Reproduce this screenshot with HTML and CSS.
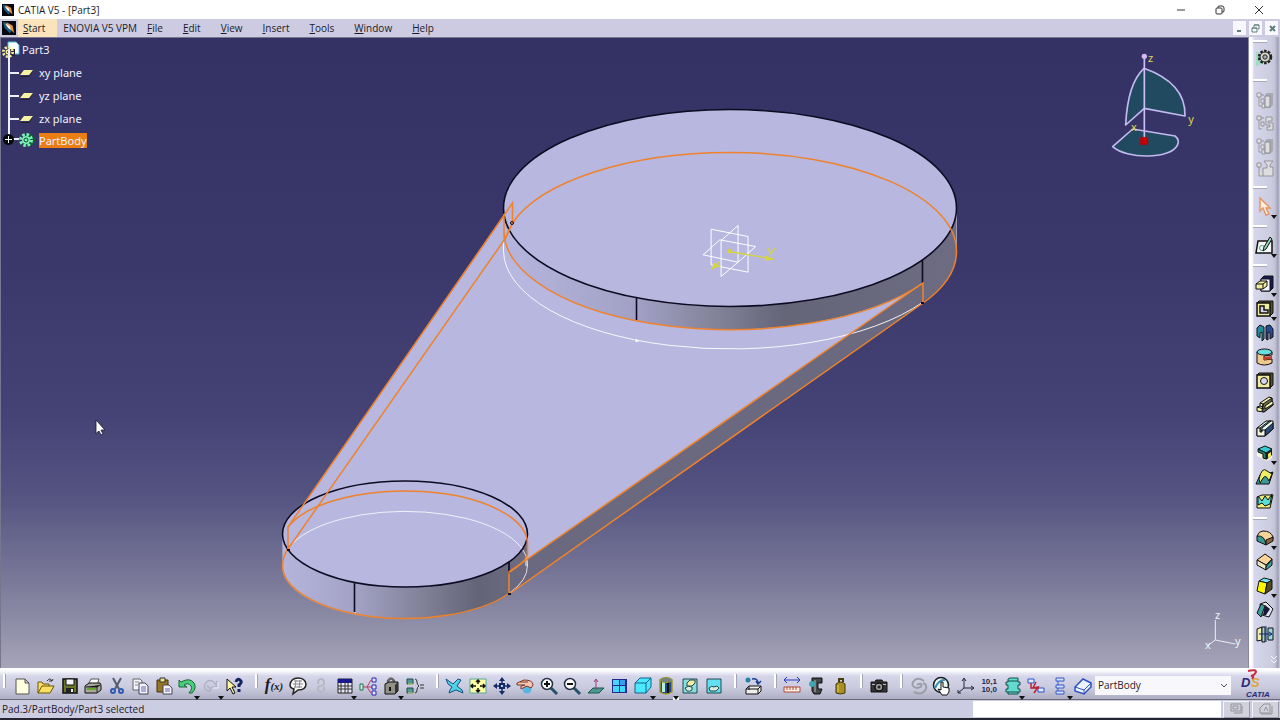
FILE: index.html
```html
<!DOCTYPE html>
<html lang="en">
<head>
<meta charset="utf-8">
<title>CATIA V5 - [Part3]</title>
<link rel="stylesheet" href="styles.css">
</head>
<body>
<svg class="defs" aria-hidden="true">
  <defs>
    <symbol id="app" viewBox="0 0 16 16"><path fill="#07080f" d="M0 0h16v16H0z"/><path fill="#1d5c86" d="M1 1l6 1 5 8-3 4-6-6z"/><path fill="#e8913f" d="M6 2l6 3 2 9-4-4-6-6z"/><path fill="#f4ffff" d="M4 3l5 3 1 4-3-2z"/></symbol>
    <symbol id="plane" viewBox="0 0 14 8"><path fill="#222" d="M1 7h8l4-6v1l-4 6H0z"/><path fill="#f6f3a0" d="M4 1h9L9 6H0z"/></symbol>
    <symbol id="node" viewBox="0 0 20 20"><path d="M2 3h4v4H2zM4 7v9h3M6 5h3M6 9h3v4H6zM7 14h3v4H7z" fill="#e2e2ec" stroke="#96969f"/><path d="M10 5l2-2h6v12l-3 3h-5z" fill="#a9a9b2"/><path d="M10 6h5v11h-5z" fill="#ddd" stroke="#8c8c95"/></symbol>
  </defs>
</svg>

<header class="titlebar">
  <svg class="titlebar-icon"><use href="#app"/></svg>
  <h1 class="titlebar-text">CATIA V5 - [Part3]</h1>
  <div class="window-controls">
    <button aria-label="Minimize"><svg viewBox="0 0 10 10"><path d="M1 5h8" /></svg></button>
    <button aria-label="Restore"><svg viewBox="0 0 10 10"><rect x="1" y="3" width="6" height="6" rx="1"/><path d="M3 3V2q0-1 1-1h3q2 0 2 2v3q0 1-1 1H7"/></svg></button>
    <button aria-label="Close"><svg viewBox="0 0 10 10"><path d="M1 1l8 8M9 1L1 9"/></svg></button>
  </div>
</header>

<nav class="menubar">
  <svg class="menubar-icon"><use href="#app"/></svg>
  <button class="menu menu-start"><u>S</u>tart</button>
  <button class="menu menu-enovia">ENOVIA V5 VPM</button>
  <button class="menu"><u>F</u>ile</button>
  <button class="menu"><u>E</u>dit</button>
  <button class="menu"><u>V</u>iew</button>
  <button class="menu"><u>I</u>nsert</button>
  <button class="menu"><u>T</u>ools</button>
  <button class="menu"><u>W</u>indow</button>
  <button class="menu"><u>H</u>elp</button>
  <div class="mdi-controls">
    <button aria-label="Minimize document"><svg viewBox="0 0 10 10"><path d="M2 8h4" stroke-width="2"/></svg></button>
    <button aria-label="Restore document"><svg viewBox="0 0 10 10"><path d="M1 5h5v4H1zM3 4V2h5v4H7M1 5h5M3 2h5"/></svg></button>
    <button aria-label="Close document"><svg viewBox="0 0 10 10"><path d="M3 3l5 5M8 3L3 8" stroke-width="2"/></svg></button>
  </div>
</nav>

<div class="workspace">
<main class="viewport">
  <svg class="scene" viewBox="0 37 1248 631" preserveAspectRatio="xMidYMid slice" role="img" aria-label="3D part">
    <defs>
      <linearGradient id="bigSide" gradientUnits="userSpaceOnUse" x1="503" y1="0" x2="957" y2="0"><stop offset="0" stop-color="#b6b5de"/><stop offset=".3" stop-color="#a1a0c4"/><stop offset=".47" stop-color="#828299"/><stop offset=".62" stop-color="#656578"/><stop offset="1" stop-color="#6d6c82"/></linearGradient>
      <linearGradient id="smallSide" gradientUnits="userSpaceOnUse" x1="282" y1="0" x2="528" y2="0"><stop offset="0" stop-color="#b5b4dc"/><stop offset=".3" stop-color="#a3a2c5"/><stop offset=".6" stop-color="#7d7d94"/><stop offset=".8" stop-color="#646477"/><stop offset="1" stop-color="#6d6c82"/></linearGradient>
    </defs>
    <path fill="#b8b7e0" d="M513 203L288 527v22l121 30 100-7L923 283 730 200z"/>
    <path fill="#6a697f" d="M923 283v20L509 594v-22z"/>
    <path fill="url(#bigSide)" d="M503.500 208V230A226.500 98.500 0 0 0 923 282.500V302A226.500 98.500 0 0 0 956.500 251V208z"/>
    <ellipse cx="730" cy="208" rx="226.500" ry="98.500" fill="#b8b7e0"/>
    <path fill="url(#smallSide)" d="M282 534v31A123 53 0 0 0 509 594.500V572q18-10 18-18V534z"/>
    <ellipse cx="405" cy="534" rx="123" ry="53" fill="#b8b7e0"/>
    <g fill="none" stroke="#fff">
      <path d="M503.500 238V251A226.500 98.500 0 0 0 923 302" stroke-opacity=".9"/>
      <path d="M288.500 548A122.500 53 0 0 1 527.500 565A122.500 53 0 0 1 509 593.500" stroke-opacity=".8"/>
      <path d="M282.500 540v22M956.500 212v36" stroke="#9c9bb8"/>
      <path d="M635 341h4M636.500 339v3M354 613h2M526 560v6"/>
    </g>
    <g fill="none" stroke="#0d0b22" stroke-width="1.600">
      <ellipse cx="730" cy="208" rx="226.500" ry="98.500"/>
      <ellipse cx="405" cy="534" rx="122.500" ry="53"/>
      <path d="M636.500 297v23M922.500 260v24M354.500 583v29M509 562v12"/>
    </g>
    <g fill="none" stroke="#ef822b" stroke-width="1.500">
      <path d="M504 230A226.500 98.500 0 0 0 923 283V303A226.500 98.500 0 0 0 956.500 251A226.500 98.500 0 0 0 730 152.500A226.500 98.500 0 0 0 512.500 223L504 241V214"/>
      <path d="M504 241L512.500 223V203L288 527V549L507 236"/>
      <path d="M923 283L509 572V594L923 303"/>
      <path d="M288 527A123 53 0 0 1 527.500 543v12q-3 8-18 17"/>
      <path d="M288 549Q283 556 282.500 565A122.500 53 0 0 0 509 593.500"/>
    </g>
    <g fill="none" stroke="#0d0b22"><circle cx="512" cy="223" r="1.500"/><path stroke-width="2" d="M921 303h3M287 550h3M508 594h3"/></g>
    <g transform="translate(480 100) scale(.333)" fill="none" stroke="#fff" stroke-width="3">
      <path d="M694 388l111 22v107l-111-22zM720 420l108 20-53 47-105-22zM724 422l51-45v110l-51 43z"/>
      <path d="M745 455l135 22M720 485l-25 24M700 490l22 12M865 445l8 16 12-16M875 461v7" stroke="#d4d43c" stroke-width="4"/><path fill="#d4d43c" stroke="none" d="M857 467l29 13-30 2zM742 448h12v12h-12zM694 510l8-18 18 5z"/>
    </g>
    <path fill="#fff" stroke="#15142c" stroke-width=".8" d="M96 420v13.500l3-2.500 2 4 2-1-2-4h4z"/>
  </svg>

  <ul class="tree">
    <li class="tree-row tree-root"><svg class="tree-root-icon" viewBox="0 0 20 18"><path fill="#fff" stroke="#53b9cc" d="M8 1h8l3 3v9H8z"/><path fill="#28203a" d="M9 8h6v7H9z"/><circle cx="8" cy="11" r="4.500" fill="none" stroke="#f2ee9a" stroke-width="3" stroke-dasharray="2 1.500"/><circle cx="8" cy="11" r="3" fill="#f2ee9a" stroke="#444" /><circle cx="8" cy="11" r="1" fill="#333"/></svg><span>Part3</span></li>
    <li class="tree-row tree-branch"><svg class="plane-icon"><use href="#plane"/></svg><span>xy plane</span></li>
    <li class="tree-row tree-branch"><svg class="plane-icon"><use href="#plane"/></svg><span>yz plane</span></li>
    <li class="tree-row tree-branch"><svg class="plane-icon"><use href="#plane"/></svg><span>zx plane</span></li>
    <li class="tree-row tree-branch tree-body"><button class="expander" aria-label="Expand PartBody"></button><svg class="body-icon" viewBox="0 0 16 16"><circle cx="10" cy="8" r="6" fill="#0f5e3c"/><circle cx="7" cy="8" r="5.500" fill="none" stroke="#7df0b4" stroke-width="3" stroke-dasharray="2.500 1.800"/><circle cx="7" cy="8" r="4" fill="#7df0b4"/><circle cx="7" cy="8" r="2" fill="#7df0b4" stroke="#0b4a34"/></svg><span class="selected">PartBody</span></li>
  </ul>

  <svg class="compass" viewBox="90 150 270 330" role="img" aria-label="Compass">
    <g fill="#214a60" stroke="#c3b9ee" stroke-width="5" stroke-linejoin="round"><path d="M192 205Q143 250 137 375L193 325 315 348Q318 250 192 205z"/><path d="M98 440L158 387 285 408Q300 420 292 436C270 478 140 478 98 440z"/></g>
    <path d="M193 170V412" stroke="#cdbff5" stroke-width="5"/><circle cx="193" cy="169" r="8" fill="#d7b8f0"/>
    <path fill="#c60000" stroke="#a00" d="M181 412h23v22h-23z"/>
    <g class="compass-label"><text x="204" y="187">z</text><text x="325" y="368">y</text><text x="153" y="394">x</text></g>
  </svg>
  <svg class="axis" viewBox="60 345 135 150" role="img" aria-label="Axis system">
    <path d="M106 390V450L166 462M106 450L84 466" fill="none" stroke="#eee" stroke-width="3"/>
    <g class="axis-label"><text x="105" y="388">z</text><text x="165" y="464">y</text><text x="75" y="476">x</text></g>
  </svg>
</main>

<aside class="sidebar" aria-label="Part Design tools">
  <div class="tool-group tool-group-first"><button class="tool" aria-label="Part Design"><svg viewBox="0 0 20 20"><path fill="#9fdcc0" d="M1 3l6 6 10 3-16 6z"/><circle cx="10" cy="9" r="6" fill="none" stroke="#222" stroke-width="2.500" stroke-dasharray="2.500 1.300"/><circle cx="10" cy="9" r="5" fill="#d9d8cf" stroke="#222"/><circle cx="10" cy="9" r="2.200" fill="#aaa" stroke="#222"/></svg></button></div>
  <div class="tool-group tool-group-muted">
    <button class="tool" aria-label="Insert body" disabled><svg><use href="#node"/></svg></button>
    <button class="tool" aria-label="Boolean" disabled><svg viewBox="0 0 20 20"><path d="M2 3h4v4H2zM4 7v9h3M6 5h3M6 9h3v4H6zM11 4h6v4h-4v2h5v7h-6v-3h3v-2h-4z" fill="#ddd" stroke="#94949d"/></svg></button>
    <button class="tool" aria-label="Assemble" disabled><svg><use href="#node"/></svg></button>
    <button class="tool" aria-label="Remove lump" disabled><svg viewBox="0 0 20 20"><path d="M2 4h4v4H2zM4 8v9h4M9 2h9l-3 4v2h3v9H8V9h4V6z" fill="#ddd" stroke="#94949d"/></svg></button>
  </div>
  <div class="tool-group"><button class="tool drop" aria-label="Select"><svg viewBox="0 0 20 20"><path fill="#fff1df" stroke="#e79565" stroke-width="1.500" d="M5 1v13l3-3 3 7 3-1-3-6h4z"/></svg></button></div>
  <div class="tool-group"><button class="tool drop" aria-label="Sketch"><svg viewBox="0 0 20 20"><path fill="#f4fbf8" stroke="#111" stroke-width="1.500" d="M3 5h14v12H1z"/><circle cx="7" cy="12" r="2.500" fill="none" stroke="#4a9f86"/><path stroke="#111" fill="#93d1b8" d="M15 1l2 2-6 10-3 2 1-4z"/></svg></button></div>
  <div class="tool-group tool-group-long">
    <button class="tool drop" aria-label="Pad"><svg viewBox="0 0 20 20"><path fill="#191b55" stroke="#111" d="M6 4l3-3h9v12l-3 3H6z"/><path fill="#f5f4ff" stroke="#111" d="M6 4h9v12H6z"/><path fill="#f1ed9d" stroke="#111" d="M1 9l4-3h7v5l-4 3H1zM1 9h7v5M8 9l4-3"/></svg></button>
    <button class="tool drop" aria-label="Pocket"><svg viewBox="0 0 20 20"><path fill="#55532c" stroke="#111" d="M2 4l2-2h14v12l-3 3"/><path fill="#f0eda3" stroke="#111" stroke-width="1.500" d="M2 4h13v13H2z"/><path fill="#d5d5f0" stroke="#111" stroke-width="1.500" d="M5 7h4v4h4v3H5z"/></svg></button>
    <button class="tool" aria-label="Shaft"><svg viewBox="0 0 20 20"><path fill="#268a9d" stroke="#111" d="M2 5l3-3 4 2v12l-2 2V9l-2 1v5l-3-2z"/><path fill="#294b96" stroke="#111" d="M11 3l4-1 3 4v8l-3 2v-6l-2-1v8l-2-1z"/></svg></button>
    <button class="tool" aria-label="Groove"><svg viewBox="0 0 20 20"><path fill="#efc98c" stroke="#111" d="M2 5v11q7 4 15 0v-4l-8 1V9l8-1V5z"/><ellipse cx="9.500" cy="5" rx="7.500" ry="3" fill="#67dce1" stroke="#111"/><path fill="#c0402c" d="M9 10l8-1v3l-8 1z"/></svg></button>
    <button class="tool" aria-label="Hole"><svg viewBox="0 0 20 20"><path fill="#55532c" stroke="#111" d="M2 4l2-2h14v12l-3 3"/><path fill="#f0eda3" stroke="#111" stroke-width="1.500" d="M2 4h13v13H2z"/><circle cx="9" cy="10" r="3.500" fill="#d5d5f0" stroke="#111"/></svg></button>
    <button class="tool" aria-label="Rib"><svg viewBox="0 0 20 20"><path fill="#f5f0a8" stroke="#111" d="M2 12l3-1V8l9-6 3 1v3l1 1v3l-9 7-7-1z"/><path fill="#67674a" stroke="#111" d="M8 9l9-6v3l-7 5v3l8-5v1l-9 7-2-1z"/><path fill="none" stroke="#111" d="M5 8l3 1v3l-3-1M2 12l7 2"/></svg></button>
    <button class="tool" aria-label="Slot"><svg viewBox="0 0 20 20"><path fill="#e9f6ed" stroke="#111" d="M2 9l9-7h7v8l-8 7H2z"/><path fill="#2b4a76" stroke="#111" d="M10 11l8-7v6l-8 7z"/><path fill="#54b6ad" stroke="#111" d="M2 9h2v3h3v-3l9-7h-2L5 9v2"/><path fill="#f4f4dc" stroke="#111" d="M2 9v8h8v-6H7v2H5V9z"/></svg></button>
    <button class="tool drop" aria-label="Solid Combine"><svg viewBox="0 0 20 20"><path fill="#f8f6da" d="M2 6h15v9l-5 3-10-5z"/><path fill="#35cbd2" stroke="#111" d="M3 6l7-3 7 3-6 4z"/><path fill="#29866d" stroke="#111" d="M3 6l8 4v6l-3-1v-4l-5-2z"/><path fill="#1c1c20" d="M11 10l6-4v6l-6 5z"/><path fill="#f2ed56" d="M13 11l3-2v4l-3 2z"/></svg></button>
    <button class="tool" aria-label="Multi-sections Solid"><svg viewBox="0 0 20 20"><path fill="#3c9797" stroke="#111" d="M1 17l4-9h3l10-3-4 12z"/><path fill="#f1ef61" stroke="#111" d="M4 12Q7-1 12 4l5 3-3 7q-3-7-6-3l-3 5z"/></svg></button>
    <button class="tool" aria-label="Removed Multi-sections Solid"><svg viewBox="0 0 20 20"><path fill="#f1ee76" stroke="#111" d="M2 6l5-2h11l-3 13H2z"/><path fill="#56dfd2" stroke="#111" d="M3 5l4 5 3-5 3 4 4-6-2 10-5 2-3-3-4 2z"/></svg></button>
  </div>
  <div class="tool-group">
    <button class="tool drop" aria-label="Edge Fillet"><svg viewBox="0 0 20 20"><path fill="#f8d49b" stroke="#111" d="M2 8Q4 3 8 3q8 0 10 6v2l-7 3z"/><path fill="#35998e" stroke="#111" d="M2 8q8-1 9 9l-9-4z"/><path fill="#88633d" stroke="#111" d="M11 12l7-3v4l-7 4z"/></svg></button>
    <button class="tool" aria-label="Chamfer"><svg viewBox="0 0 20 20"><path fill="#f8d49b" stroke="#111" d="M2 8l8-6 7 5-6 6z"/><path fill="#e9e8c0" stroke="#111" d="M2 8l9 5v5l-9-5z"/><path fill="#3aa39a" stroke="#111" d="M11 15l6-8v6l-6 5z"/></svg></button>
    <button class="tool drop" aria-label="Draft Angle"><svg viewBox="0 0 20 20"><path fill="#72eaea" stroke="#111" d="M4 5l5-3 8 2-5 3z"/><path fill="#fbf600" stroke="#111" d="M4 5l8 2-2 11-8-3z"/><path fill="#554b20" stroke="#111" d="M12 7l5-3v9l-7 5z"/></svg></button>
    <button class="tool" aria-label="Shell"><svg viewBox="0 0 20 20"><path fill="#e6e5ec" stroke="#111" d="M5 4l6-2 7 7-4 8-7-2z"/><path fill="#3e9d95" stroke="#111" d="M2 13l4-9 4 2-4 11z"/><path fill="#171738" d="M10 5l5 4-4 6-3 0z"/></svg></button>
    <button class="tool" aria-label="Mirror"><svg viewBox="0 0 20 20"><path fill="#f0edb0" stroke="#111" d="M2 5l5-2v13l-5 1z"/><path fill="#9bd6da" stroke="#111" d="M7 3h3v15H7zM13 4h5v12h-5z"/><path stroke="#112a72" fill="none" d="M4 10h13M14 8l3 2-3 2M11 2v16"/></svg></button>
  </div>
  <svg class="more" viewBox="0 0 8 10"><path d="M1 1l3 3 3-3M1 5l3 3 3-3" fill="none" stroke="#f8f8ff"/></svg>
</aside>
</div>

<section class="toolbar" aria-label="Standard tools">
  <div class="strip">
    <div class="bar-group g10">
      <button class="bar-tool" aria-label="New"><svg viewBox="0 0 20 20"><path fill="#fffde1" stroke="#55554e" d="M3 3h9l4 4v11H3zM12 3v4h4"/></svg></button>
      <button class="bar-tool" aria-label="Open"><svg viewBox="0 0 20 20"><path fill="#f8df61" stroke="#6b570e" d="M2 17V6h4l1 2h6v2M2 17l4-7h12l-4 7z"/><path d="M11 5q3-4 5 0l1-2M16 5h-3" fill="none" stroke="#333"/></svg></button>
      <button class="bar-tool" aria-label="Save"><svg viewBox="0 0 20 20"><path fill="#6c762b" stroke="#111" stroke-width="1.500" d="M3 3h14v14H3z"/><path fill="#f3f3f9" stroke="#111" d="M6 3h8v6H6z"/><path fill="#222" d="M6 12h8v5H6z"/><path fill="#eee" d="M11 13h2v3h-2z"/></svg></button>
      <button class="bar-tool" aria-label="Print"><svg viewBox="0 0 20 20"><path fill="#fff" stroke="#555" d="M8 3h8l-2 6H5z"/><path fill="#a8a99b" stroke="#111" d="M2 10l4-3h11l1 2v5l-4 3H2z"/><path stroke="#62a52b" stroke-width="2" d="M4 13h9"/><path stroke="#222" d="M3 11h11l3-2M14 11v6"/></svg></button>
      <button class="bar-tool" aria-label="Cut"><svg viewBox="0 0 20 20"><path stroke="#555a69" stroke-width="2" d="M6 2l6 11M14 2L8 13"/><g fill="none" stroke="#2f5cae" stroke-width="2"><circle cx="6" cy="15" r="2"/><circle cx="14" cy="15" r="2"/></g></svg></button>
      <button class="bar-tool" aria-label="Copy"><svg viewBox="0 0 20 20"><path fill="#f3f3fb" stroke="#666" d="M3 3h7l2 2v9H3z"/><path stroke="#888" d="M5 6h4M5 9h3"/><path fill="#f3f3fb" stroke="#445" d="M9 7h6l3 3v8H9z"/><path stroke="#6d62b2" d="M11 11h5M11 13h5M11 15h5"/></svg></button>
      <button class="bar-tool" aria-label="Paste"><svg viewBox="0 0 20 20"><path fill="#967526" stroke="#40300d" d="M3 4h11v12H3z"/><path fill="#eee28c" stroke="#333" d="M6 2h5v4H6z"/><path fill="#f3f3fb" stroke="#445" d="M9 9h6l3 3v6H9z"/><path stroke="#6d62b2" d="M11 13h5M11 15h5"/></svg></button>
      <button class="bar-tool drop" aria-label="Undo"><svg viewBox="0 0 20 20"><path fill="#49cf79" stroke="#17643a" d="M2 11V4l2 2q9-5 13 1 3 5-2 10h-3q4-5 2-7-3-4-7-1l3 2z"/></svg></button>
      <button class="bar-tool drop" aria-label="Redo"><svg viewBox="0 0 20 20"><path d="M16 5v6h-5M16 10Q9 0 4 8q-2 7 5 7l1-3Q6 12 7 9" fill="none" stroke="#b0b0c3" stroke-width="1.500"/><path d="M17 6v6h-5" fill="none" stroke="#f4f4fb"/></svg></button>
      <button class="bar-tool" aria-label="What's This?"><svg viewBox="0 0 20 20"><path fill="#fbf7a4" stroke="#111" d="M2 3v12l3-3 3 6 2-1-3-6h4z"/><path d="M11 6q1-4 4-2 3 2-1 5v2M14 13v3" fill="none" stroke="#12245e" stroke-width="3"/></svg></button>
    </div>
    <div class="bar-group g7">
      <button class="bar-tool" aria-label="Formula"><span class="formula">f<small>(x)</small></span></button>
      <button class="bar-tool" aria-label="Comment"><svg viewBox="0 0 20 20"><path fill="#f7f7f7" stroke="#222" stroke-width="1.500" d="M2 9Q3 2 10 2t8 6q0 6-8 6l-5 4 1-5Q2 12 2 9z"/><path d="M5 8h10M6 5h8M6 11h8M8 4l-1 8M12 4l-1 8" stroke="#888"/></svg></button>
      <button class="bar-tool" aria-label="Link"><svg viewBox="0 0 20 20"><path d="M7 8Q7 3 10 3t3 4-3 2M10 10q-4 0-3 4 3 4 6 0v-3" fill="none" stroke="#b7b7c4" stroke-width="2"/></svg></button>
      <button class="bar-tool drop" aria-label="Design Table"><svg viewBox="0 0 20 20"><path fill="#e9e9fb" stroke="#222" d="M3 3h14v14H3z"/><path fill="#17178f" d="M3 3h14v4H3z"/><path stroke="#333" d="M6 6v11M10 6v11M13 6v11M3 10h14M3 13h14"/></svg></button>
      <button class="bar-tool" aria-label="Relations"><svg viewBox="0 0 20 20"><path d="M5 11h4L13 4M9 11h5M9 11l4 6" fill="none" stroke="#bc3b62"/><path fill="#d9f4e5" stroke="#17704c" d="M2 8h3v6H2z"/><path fill="#e8e8ff" stroke="#2525b5" d="M14 2h4v4h-4zM14 9h4v4h-4zM14 15h4v4h-4z"/></svg></button>
      <button class="bar-tool drop" aria-label="Lock"><svg viewBox="0 0 20 20"><path d="M6 9V5q3-5 6 0v4" fill="none" stroke="#666" stroke-width="2.500"/><path fill="#919185" stroke="#111" d="M3 8l4-2h9v9l-3 3H3z"/><path fill="#33332f" d="M13 9l3-3v9l-3 3z"/><path d="M8 11v4" stroke="#111" stroke-width="2"/></svg></button>
      <button class="bar-tool" aria-label="Equivalent Dimensions"><svg viewBox="0 0 20 20"><path fill="#4b9d94" stroke="#27464e" d="M2 3h6v5H2zM2 12h6v5H2z"/><path stroke="#d6e476" d="M3 8h5M3 17h5"/><path d="M10 3q2 0 2 3t2 4q-2 1-2 4t-2 3M15 9h4M15 12h4" fill="none" stroke="#333"/></svg></button>
    </div>
    <div class="bar-group g12">
      <button class="bar-tool" aria-label="Fly Mode"><svg viewBox="0 0 20 20"><path fill="#4fd0e4" stroke="#17507e" d="M1 3l7 5 5-5 3 1-4 6 5 4 1 3-7-3-7 3 1-3 2-3-4-3z"/></svg></button>
      <button class="bar-tool" aria-label="Fit All In"><svg viewBox="0 0 20 20"><path fill="#ffffa8" stroke="#4fa995" d="M2 3h16v14H2z"/><path stroke="#111" stroke-width="1.500" fill="none" d="M10 4v4M8 6l2-2 2 2M10 16v-4M8 14l2 2 2-2M3 10h5M5 8l-2 2 2 2M17 10h-5M15 8l2 2-2 2"/></svg></button>
      <button class="bar-tool" aria-label="Pan"><svg viewBox="0 0 20 20"><path stroke="#142b68" stroke-width="1.500" fill="none" d="M10 3v14M3 10h14"/><path fill="#142b68" d="M10 1l3 4H7zM10 19l3-4H7zM1 10l4-3v6zM19 10l-4-3v6zM7 7h6v6H7z"/><path fill="#b9d8ff" d="M9 9h2v2H9z"/></svg></button>
      <button class="bar-tool" aria-label="Rotate"><svg viewBox="0 0 20 20"><circle cx="12" cy="13" r="4.500" fill="#56b5e1"/><path fill="#f4c8b1" stroke="#7c3528" d="M2 7l7-3q9 0 9 5l-2 3-4-2-6 3v-3l4-1H2z"/><path d="M5 6h8" stroke="#7c3528"/></svg></button>
      <button class="bar-tool" aria-label="Zoom In"><svg viewBox="0 0 20 20"><path d="M12 12l6 6" stroke="#245368" stroke-width="3"/><circle cx="8" cy="8" r="5.500" fill="#fafaff" stroke="#28313e" stroke-width="1.500"/><path d="M5 8h6M8 5v6" stroke="#111" stroke-width="2"/></svg></button>
      <button class="bar-tool" aria-label="Zoom Out"><svg viewBox="0 0 20 20"><path d="M12 12l6 6" stroke="#245368" stroke-width="3"/><circle cx="8" cy="8" r="5.500" fill="#fafaff" stroke="#28313e" stroke-width="1.500"/><path d="M5 8h6" stroke="#111" stroke-width="2"/></svg></button>
      <button class="bar-tool" aria-label="Normal View"><svg viewBox="0 0 20 20"><path fill="#489b8e" stroke="#1b554e" d="M2 17l5-5h11l-5 5z"/><path d="M10 14V4M8 6l2-3 2 3" fill="none" stroke="#9b3b7c"/></svg></button>
      <button class="bar-tool" aria-label="Multi-View"><svg viewBox="0 0 20 20"><path fill="#25288c" d="M3 3h15v14H3z"/><path fill="#42d9ff" d="M4 4h6v5H4zM4 10h6v6H4zM11 10h5v6h-5z"/><path fill="#3b9cf0" d="M11 4h5v5h-5z"/></svg></button>
      <button class="bar-tool drop" aria-label="Isometric View"><svg viewBox="0 0 20 20"><path fill="#4ce8ff" stroke="#176189" d="M2 7l5-5h11v9l-5 6H2z"/><path fill="none" stroke="#176189" d="M2 7h11v10M13 7l5-5"/></svg></button>
      <button class="bar-tool drop drop-light" aria-label="Shading with Edges"><svg viewBox="0 0 20 20"><path fill="#1c4b86" stroke="#a19b23" stroke-width="1.500" d="M4 4v12q6 4 12 0V4z"/><path fill="#b6efe1" d="M6 6h3v10H6z"/><path fill="#111" d="M11 6h2v11h-2z"/><ellipse cx="10" cy="4" rx="6" ry="2.500" fill="#738282" stroke="#9d972c"/></svg></button>
      <button class="bar-tool" aria-label="Hide/Show"><svg viewBox="0 0 20 20"><path fill="#85dfdf" stroke="#26464e" d="M3 3h14v14H3z"/><path fill="#f2eda0" stroke="#26464e" d="M7 7l3-3h5v3l-3 3H7z"/><path fill="#d4eddb" stroke="#26464e" d="M5 12q3-3 7-1v3q-2 2-5 1z"/></svg></button>
      <button class="bar-tool" aria-label="Swap Visible Space"><svg viewBox="0 0 20 20"><path fill="#62dff1" stroke="#26464e" d="M3 3h14v14H3z"/><path fill="#d4eddb" stroke="#26464e" d="M5 12q3-3 5-1l3-1 2 2-3 3H6z"/></svg></button>
    </div>
    <div class="bar-group g1"><button class="bar-tool" aria-label="Create Datum"><svg viewBox="0 0 20 20"><circle cx="5" cy="4" r="2.500" fill="#287fa8"/><path d="M9 3q6-1 6 4M13 5l2 3 3-3" fill="none" stroke="#1d3e92" stroke-width="1.500"/><path fill="#eee" stroke="#111" d="M3 13l3-3h12v5l-3 3H3zM3 13h12v5M15 13l3-3M6 10v4"/></svg></button></div>
    <div class="bar-group g3">
      <button class="bar-tool" aria-label="Measure Between"><svg viewBox="0 0 20 20"><path d="M2 4h16M5 1L2 4l3 3M15 1l3 3-3 3" fill="none" stroke="#2734bf"/><path fill="#faf2e2" stroke="#ac473d" d="M2 11h16v5H2z"/><path stroke="#ac473d" d="M5 11v3M8 11v3M11 11v3M14 11v3"/></svg></button>
      <button class="bar-tool" aria-label="Measure Item"><svg viewBox="0 0 20 20"><path fill="#434747" stroke="#111" d="M6 2h10v5h-4v6h4l-2 5H8l-2-3V6z"/><path stroke="#bbb" d="M9 4v12"/><circle cx="6" cy="8" r="3" fill="#3ba8b3"/></svg></button>
      <button class="bar-tool" aria-label="Measure Inertia"><svg viewBox="0 0 20 20"><path d="M9 6V3h4v3" fill="none" stroke="#46400d" stroke-width="2"/><path fill="#a99020" stroke="#403709" d="M6 8q5-4 9 0v9q-5 2-9 0z"/><path stroke="#e0ce6c" d="M8 9v7"/></svg></button>
    </div>
    <div class="bar-group g1"><button class="bar-tool" aria-label="Capture"><svg viewBox="0 0 20 20"><path fill="#343437" stroke="#111" d="M2 6h4l1-2h6l1 2h4v10H2z"/><path fill="#bbb" d="M3 8h14v1H3z"/><circle cx="10" cy="11" r="4" fill="#999" stroke="#111" stroke-width="1.500"/><circle cx="10" cy="11" r="1.500" fill="#222"/></svg></button></div>
    <div class="bar-group g8">
      <button class="bar-tool" aria-label="Update All"><svg viewBox="0 0 20 20"><path d="M15 5Q8 0 4 6q-2 5 4 6 6-1 4-4-2-1-4 1M5 16q8 4 12-3 1-5-3-6" fill="none" stroke="#9d9da9" stroke-width="2"/></svg></button>
      <button class="bar-tool" aria-label="Manual Update"><svg viewBox="0 0 20 20"><circle cx="9" cy="9" r="7.500" fill="#eaf8ef" stroke="#171b25" stroke-width="1.500"/><path d="M3 12q4-9 10-8" stroke="#3990b3" stroke-width="2" fill="none"/><path fill="#fff" stroke="#111" d="M9 6h2v5l6 1v4l-2 3h-5l-4-6 3 1z"/></svg></button>
      <button class="bar-tool" aria-label="Axis System"><svg viewBox="0 0 20 20"><path d="M8 3v9h10M8 12l-6 5M6 5l2-3 2 3M15 10l3 2-3 2M2 14v3h3" fill="none" stroke="#252535"/></svg></button>
      <button class="bar-tool" aria-label="Mean Dimensions"><span class="digits">10,1<br>10,0</span></button>
      <button class="bar-tool drop" aria-label="Create Part"><svg viewBox="0 0 20 20"><path fill="#63dad0" stroke="#174c46" d="M5 3l2-1h8v4h2v3h-2v4h2v3h-2v2H5v-2H3v-3h2V9H3V6h2z"/><path stroke="#174c46" d="M5 5h10M5 16h10"/></svg></button>
      <button class="bar-tool" aria-label="Isolate"><svg viewBox="0 0 20 20"><path fill="#e4eaff" stroke="#2b50d0" d="M2 3h6v4H2zM12 12h6v4h-6z"/><path d="M5 7v5h8M10 6l-3 6 5-1-4 6" fill="none" stroke="#ba2036" stroke-width="1.500"/></svg></button>
      <button class="bar-tool drop" aria-label="List"><svg viewBox="0 0 20 20"><path fill="#d7e1ff" stroke="#3158c8" d="M6 2h8v3H6zM6 9h8v3H6zM6 15h8v3H6z"/><path stroke="#3158c8" d="M8 5v4M8 12v3"/></svg></button>
      <button class="bar-tool" aria-label="In Work Object"><svg viewBox="0 0 20 20"><path fill="#eef4ff" stroke="#2c50be" stroke-width="1.500" d="M2 11l8-8 8 4v4l-7 7-9-3z"/><path fill="none" stroke="#2c50be" d="M2 11l9 3 7-7M11 14v4"/></svg></button>
    </div>
  </div>
  <div class="picker"><select aria-label="Current body"><option>PartBody</option></select><svg viewBox="0 0 8 5"><path d="M1 1l3 3 3-3" fill="none" stroke="#555"/></svg></div>
  <svg class="logo" viewBox="0 0 36 30" role="img" aria-label="3DS CATIA"><path d="M8 2q8-2 8 1-1 3-5 4 4 0 1 3" fill="none" stroke="#c72c3d" stroke-width="2"/><text class="logo-d" x="1" y="18">D</text><text class="logo-s" x="11" y="18">S</text><text class="logo-name" x="6" y="28">CATIA</text></svg>
</section>

<footer class="statusbar">
  <output class="status-text">Pad.3/PartBody/Part3 selected</output>
  <input class="power-input" type="text" aria-label="Power input">
  <button class="status-button" aria-label="Dialog"><svg viewBox="0 0 16 12"><path d="M2 1h10v7H2zM4 3h5v3H4zM5 10h8V3" fill="none" stroke="#929299"/></svg></button>
  <button class="status-button" aria-label="Assistant"><svg viewBox="0 0 16 12"><path d="M2 10V5l4-4h6v9zM6 8l2-4 2 4M3 11h11V3" fill="none" stroke="#929299"/></svg></button>
</footer>
</body>
</html>
```
FILE: styles.css
```css
* { box-sizing: border-box; }

body {
  margin: 0;
  height: 100vh;
  display: flex;
  flex-direction: column;
  overflow: hidden;
  background: #cfcfe6;
  color: #1c1c28;
  font: 10px/16px "Open Sans", "Noto Sans", sans-serif;
}

button {
  border: 0;
  padding: 0;
  margin: 0;
  background: none;
  color: inherit;
  font: inherit;
}

.defs { position: absolute; width: 0; height: 0; }

/* Title bar */
.titlebar {
  display: flex;
  align-items: center;
  flex: none;
  height: 19px;
  padding-left: 2px;
  background: #fff;
}
.titlebar-icon { width: 12px; height: 12px; }
.titlebar-text { margin: 0 0 0 4px; font-size: 10px; font-weight: 400; }
.window-controls { display: flex; margin-left: auto; padding-right: 2px; }
.window-controls button { width: 39px; height: 18px; display: grid; place-items: center; }
.window-controls svg { width: 10px; height: 10px; fill: none; stroke: #333; }

/* Menu bar */
.menubar { display: flex; align-items: center; flex: none; height: 18px; background: #cccbe2; }
.menubar-icon { width: 16px; height: 14px; margin: 0 1px; }
.menu { height: 18px; padding: 0 10px; white-space: nowrap; }
.menu-start { padding: 0 12px 0 5px; background: #fbe3bb; }
.menu-enovia { padding: 0 0 0 6px; }
.mdi-controls { display: flex; gap: 3px; margin-left: auto; padding-right: 2px; }
.mdi-controls button { width: 13px; height: 14px; background: #f8f8fc; display: grid; place-items: center; }
.mdi-controls svg { width: 10px; height: 10px; fill: none; stroke: #5f7e80; }

/* Workspace */
.workspace { display: flex; flex: 1; min-height: 0; }
.viewport {
  position: relative;
  flex: 1;
  min-width: 0;
  overflow: hidden;
  background: linear-gradient(#343265 0%, #3a386a 35%, #454376 60%, #535280 72%, #7f7e9c 88%, #a5a4b9 100%);
  box-shadow: inset 1px 1px #77768c;
}
.scene { display: block; width: 100%; height: 100%; }

.tree {
  position: absolute;
  top: 1px;
  left: 0;
  margin: 0;
  padding: 0;
  list-style: none;
  color: #f1f1fa;
  font: 11px/15px "Noto Sans", sans-serif;
}
.tree-row { display: flex; align-items: center; height: 23px; }
.tree-root { gap: 2px; }
.tree-root-icon { width: 20px; height: 18px; }
.tree-branch { position: relative; gap: 5px; padding-left: 20px; }
.tree-branch::before {
  content: "";
  position: absolute;
  left: 8px;
  bottom: 10px;
  width: 9px;
  height: 23px;
  border-left: 2px solid #eeeef8;
  border-bottom: 2px solid #eeeef8;
}
.plane-icon { width: 14px; height: 8px; }
.body-icon { width: 16px; height: 16px; }
.tree-body { height: 20px; padding-left: 19px; gap: 4px; }
.expander {
  position: absolute;
  left: 3px;
  top: 4px;
  width: 11px;
  height: 11px;
  border-radius: 50%;
  background: linear-gradient(#fff, #fff) center / 7px 1px no-repeat, linear-gradient(#fff, #fff) center / 1px 7px no-repeat, #08080f;
}
.selected { background: #ea7d14; }

.compass { position: absolute; top: 13px; right: 48px; width: 90px; height: 110px; }
.compass-label { fill: #dcd651; font: 33px "Noto Sans", sans-serif; }
.axis { position: absolute; right: 3px; bottom: 13px; width: 45px; height: 50px; }
.axis-label { fill: #f3f3f8; font: 33px "Noto Sans", sans-serif; }

/* Right tool column */
.sidebar {
  position: relative;
  flex: none;
  width: 32px;
  padding-top: 3px;
  border-left: 1px solid #8a8a9c;
  background: linear-gradient(90deg, #fff 0 3px, #d6d6ec 5px, #ccccdf 22px, #c3c3d8 26px, #9c9cb2 29px, #d2d2e4 31px);
}
.tool-group { padding: 7px 0 6px 4px; position: relative; border-top: 2px solid transparent; }
.tool-group::before {
  content: "";
  position: absolute;
  top: -2px;
  left: 4px;
  width: 14px;
  height: 2px;
  background: #fff;
  border-bottom: 1px solid #a9a9be;
}
.tool-group-first { padding-top: 4px; padding-bottom: 9px; }
.tool-group-long { padding-bottom: 4px; }
.tool { display: grid; place-items: center; position: relative; width: 24px; height: 24px; }
.tool-group-muted .tool { height: 23px; }
.tool svg, .bar-tool svg { width: 20px; height: 20px; }
.drop::after {
  content: "";
  position: absolute;
  right: 0;
  bottom: 0;
  border: 3px solid transparent;
  border-top: 4px solid #111;
  border-bottom: 0;
}
.more { position: absolute; right: 2px; bottom: 3px; width: 8px; height: 10px; }

/* Bottom toolbar */
.toolbar {
  display: flex;
  align-items: center;
  flex: none;
  height: 32px;
  border-bottom: 1px solid #686876;
  background: linear-gradient(#fff 0 2px, #d6d6ea 8px, #cacadf 20px, #adadc3 31px);
}
.strip { display: flex; flex: 1; min-width: 0; height: 24px; margin-top: 4px; }
.bar-group { display: flex; flex-basis: 0; align-items: center; box-sizing: content-box; position: relative; padding-left: 16px; }
.bar-group::before {
  content: "";
  position: absolute;
  left: 9px;
  top: 0;
  width: 2px;
  height: 14px;
  background: #fff;
  border-right: 1px solid #a3a3b6;
}
.bar-group:first-child { padding-left: 11px; }
.bar-group:first-child::before { left: 3px; }
.g1 { flex-grow: 1; }
.g3 { flex-grow: 3; }
.g7 { flex-grow: 7; }
.g8 { flex-grow: 8; }
.g10 { flex-grow: 10; }
.g12 { flex-grow: 12; }
.bar-tool { position: relative; display: grid; place-items: center; flex: 1 1 0; min-width: 0; height: 24px; }
.bar-tool.drop::after { right: -1px; bottom: -2px; }
.bar-tool.drop-light::after { background: #fff; }
.formula { font: italic bold 17px/20px "Liberation Serif", serif; color: #1c1c22; }
.formula small { font-size: 11px; }
.digits { font: bold 8px/8px "Liberation Sans", sans-serif; color: #1d294f; }

.picker { position: relative; flex: none; width: 136px; margin-top: 3px; }
.picker select {
  display: block;
  width: 100%;
  height: 19px;
  padding: 0 3px;
  border: 0;
  border-radius: 0;
  appearance: none;
  background: #f8f8fc;
  color: #1c1c28;
  font: inherit;
}
.picker svg { position: absolute; right: 3px; top: 7px; width: 8px; height: 5px; }
.logo { flex: none; width: 36px; height: 30px; margin: 0 4px 0 9px; font-family: "Liberation Sans", sans-serif; font-style: italic; font-weight: 700; }
.logo-d { fill: #292a78; font-size: 13px; }
.logo-s { fill: #dfa33a; font-size: 13px; }
.logo-name { fill: #292a78; font-size: 8px; }

/* Status bar */
.statusbar { display: flex; align-items: center; gap: 2px; flex: none; height: 20px; padding: 0 1px 0 2px; border-bottom: 2px solid #252532; background: #cccce3; }
.status-text { flex: 1; }
.power-input { width: 248px; height: 16px; padding: 0 2px; border: 0; background: #fff; font: inherit; }
.status-button { width: 27px; height: 17px; display: grid; place-items: center; background: #d2d2dd; border: 1px solid #f3f3fb; border-right-color: #9898a8; border-bottom-color: #9898a8; }
.status-button svg { width: 16px; height: 12px; }
```
